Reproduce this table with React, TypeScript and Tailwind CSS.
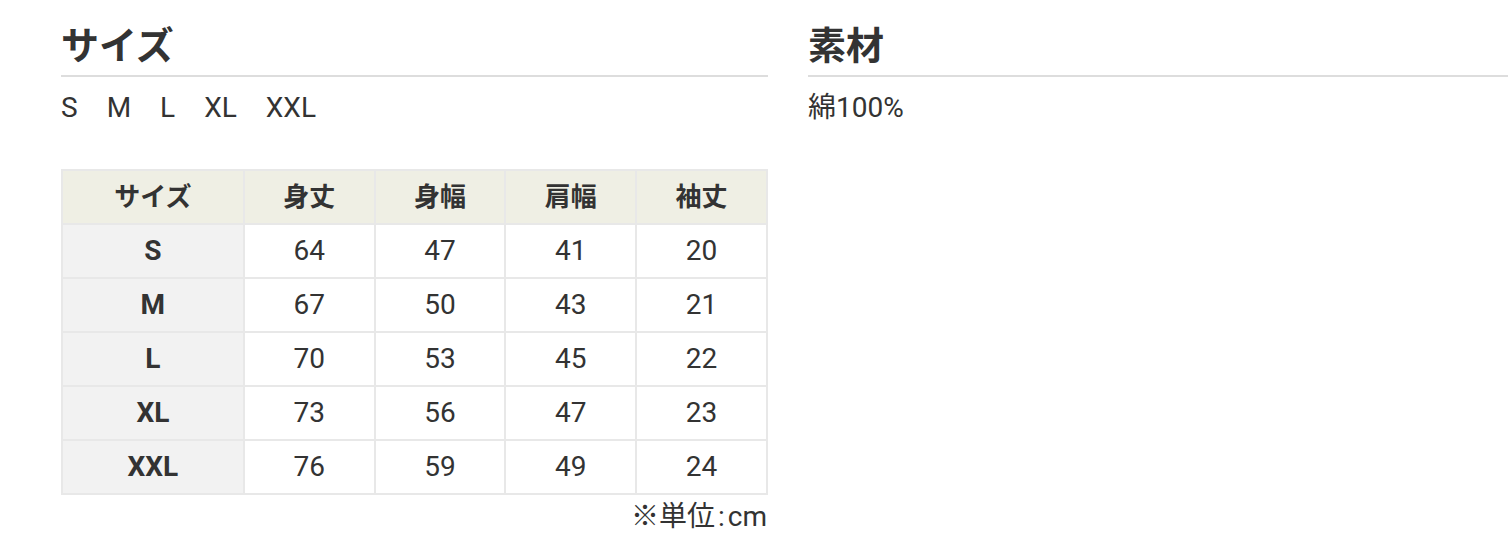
import React from "react";

const rows = [
  ["S", "64", "47", "41", "20"],
  ["M", "67", "50", "43", "21"],
  ["L", "70", "53", "45", "22"],
  ["XL", "73", "56", "47", "23"],
  ["XXL", "76", "59", "49", "24"],
];

const headers = ["サイズ", "身丈", "身幅", "肩幅", "袖丈"];

export default function App() {
  return (
    <div
      className="w-[1508px] h-[557px] bg-white text-[#333333] overflow-hidden"
      style={{ fontFamily: 'Roboto, "Noto Sans CJK JP", sans-serif' }}
    >
      <div className="flex pl-[61px] pt-[21px] gap-[40px]">
        <div className="w-[707px] shrink-0">
          <h2 className="text-[38px] font-bold leading-[50px] pb-[4px] border-b-2 border-[#dddddd]">
            サイズ
          </h2>
          <div className="flex gap-[29px] text-[28px] leading-[36px] mt-[13px]">
            <span>S</span>
            <span>M</span>
            <span>L</span>
            <span>XL</span>
            <span>XXL</span>
          </div>
          <table className="mt-[43px] border-collapse">
            <thead>
              <tr>
                {headers.map((h, i) => (
                  <th
                    key={h}
                    className={`${i === 0 ? "w-[182px]" : "w-[131px]"} h-[54px] p-0 border-2 border-[#e8e8e8] bg-[#efefe4] text-[26px] font-bold text-center align-middle`}
                  >
                    {h}
                  </th>
                ))}
              </tr>
            </thead>
            <tbody>
              {rows.map((r) => (
                <tr key={r[0]}>
                  {r.map((c, i) => (
                    <td
                      key={i}
                      className={`h-[54px] p-0 border-2 border-[#e8e8e8] text-[28px] text-center align-middle ${i === 0 ? "bg-[#f2f2f2] font-bold" : "bg-white"}`}
                    >
                      {c}
                    </td>
                  ))}
                </tr>
              ))}
            </tbody>
          </table>
          <p className="text-right text-[28px] leading-[36px] mt-[4px] w-[706px]">
            ※単位<span className="mx-[3px]">:</span>cm
          </p>
        </div>
        <div className="w-[700px] shrink-0">
          <h2 className="text-[38px] font-bold leading-[50px] pb-[4px] border-b-2 border-[#dddddd]">
            素材
          </h2>
          <p className="text-[28px] leading-[36px] mt-[13px]">綿100%</p>
        </div>
      </div>
    </div>
  );
}
